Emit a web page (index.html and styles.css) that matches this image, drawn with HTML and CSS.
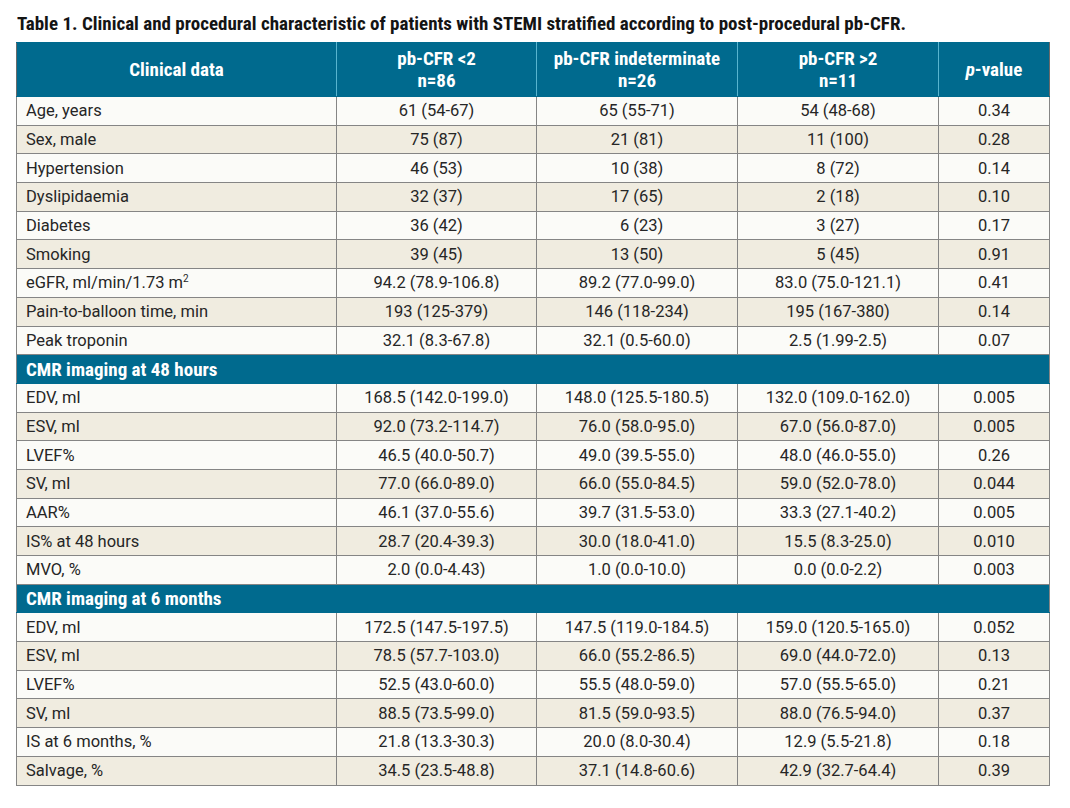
FILE: index.html
```html
<!DOCTYPE html>
<html lang="en">
<head>
<meta charset="utf-8">
<title>Table 1</title>
<link rel="stylesheet" href="styles.css">
</head>
<body>
<div class="page">
  <h1 class="caption">Table 1. Clinical and procedural characteristic of patients with STEMI stratified according to post-procedural pb-CFR.</h1>
  <table class="data">
    <colgroup>
      <col class="c1"><col class="c2"><col class="c3"><col class="c4"><col class="c5">
    </colgroup>
    <thead>
      <tr>
        <th>Clinical data</th>
        <th>pb-CFR &lt;2<br>n=86</th>
        <th>pb-CFR indeterminate<br>n=26</th>
        <th>pb-CFR &gt;2<br>n=11</th>
        <th><i>p</i>-value</th>
      </tr>
    </thead>
    <tbody>
      <tr class="w"><td>Age, years</td><td>61 (54-67)</td><td>65 (55-71)</td><td>54 (48-68)</td><td>0.34</td></tr>
      <tr class="b"><td>Sex, male</td><td>75 (87)</td><td>21 (81)</td><td>11 (100)</td><td>0.28</td></tr>
      <tr class="w"><td>Hypertension</td><td>46 (53)</td><td>10 (38)</td><td>8 (72)</td><td>0.14</td></tr>
      <tr class="b"><td>Dyslipidaemia</td><td>32 (37)</td><td>17 (65)</td><td>2 (18)</td><td>0.10</td></tr>
      <tr class="w"><td>Diabetes</td><td>36 (42)</td><td>&#8199;6 (23)</td><td>3 (27)</td><td>0.17</td></tr>
      <tr class="b"><td>Smoking</td><td>39 (45)</td><td>13 (50)</td><td>5 (45)</td><td>0.91</td></tr>
      <tr class="w"><td>eGFR, ml/min/1.73 m<sup>2</sup></td><td>94.2 (78.9-106.8)</td><td>89.2 (77.0-99.0)</td><td>83.0 (75.0-121.1)</td><td>0.41</td></tr>
      <tr class="b"><td>Pain-to-balloon time, min</td><td>193 (125-379)</td><td>146 (118-234)</td><td>195 (167-380)</td><td>0.14</td></tr>
      <tr class="w"><td>Peak troponin</td><td>32.1 (8.3-67.8)</td><td>32.1 (0.5-60.0)</td><td>2.5 (1.99-2.5)</td><td>0.07</td></tr>
      <tr class="section"><td colspan="5">CMR imaging at 48 hours</td></tr>
      <tr class="w"><td>EDV, ml</td><td>168.5 (142.0-199.0)</td><td>148.0 (125.5-180.5)</td><td>132.0 (109.0-162.0)</td><td>0.005</td></tr>
      <tr class="b"><td>ESV, ml</td><td>92.0 (73.2-114.7)</td><td>76.0 (58.0-95.0)</td><td>67.0 (56.0-87.0)</td><td>0.005</td></tr>
      <tr class="w"><td>LVEF%</td><td>46.5 (40.0-50.7)</td><td>49.0 (39.5-55.0)</td><td>48.0 (46.0-55.0)</td><td>0.26</td></tr>
      <tr class="b"><td>SV, ml</td><td>77.0 (66.0-89.0)</td><td>66.0 (55.0-84.5)</td><td>59.0 (52.0-78.0)</td><td>0.044</td></tr>
      <tr class="w"><td>AAR%</td><td>46.1 (37.0-55.6)</td><td>39.7 (31.5-53.0)</td><td>33.3 (27.1-40.2)</td><td>0.005</td></tr>
      <tr class="b"><td>IS% at 48 hours</td><td>28.7 (20.4-39.3)</td><td>30.0 (18.0-41.0)</td><td>15.5 (8.3-25.0)</td><td>0.010</td></tr>
      <tr class="w"><td>MVO, %</td><td>2.0 (0.0-4.43)</td><td>1.0 (0.0-10.0)</td><td>0.0 (0.0-2.2)</td><td>0.003</td></tr>
      <tr class="section"><td colspan="5">CMR imaging at 6 months</td></tr>
      <tr class="w"><td>EDV, ml</td><td>172.5 (147.5-197.5)</td><td>147.5 (119.0-184.5)</td><td>159.0 (120.5-165.0)</td><td>0.052</td></tr>
      <tr class="b"><td>ESV, ml</td><td>78.5 (57.7-103.0)</td><td>66.0 (55.2-86.5)</td><td>69.0 (44.0-72.0)</td><td>0.13</td></tr>
      <tr class="w"><td>LVEF%</td><td>52.5 (43.0-60.0)</td><td>55.5 (48.0-59.0)</td><td>57.0 (55.5-65.0)</td><td>0.21</td></tr>
      <tr class="b"><td>SV, ml</td><td>88.5 (73.5-99.0)</td><td>81.5 (59.0-93.5)</td><td>88.0 (76.5-94.0)</td><td>0.37</td></tr>
      <tr class="w"><td>IS at 6 months, %</td><td>21.8 (13.3-30.3)</td><td>20.0 (8.0-30.4)</td><td>12.9 (5.5-21.8)</td><td>0.18</td></tr>
      <tr class="b"><td>Salvage, %</td><td>34.5 (23.5-48.8)</td><td>37.1 (14.8-60.6)</td><td>42.9 (32.7-64.4)</td><td>0.39</td></tr>
    </tbody>
  </table>
</div>
</body>
</html>
```

FILE: styles.css
```css
html, body {
  margin: 0;
  padding: 0;
  background: #ffffff;
}

.page {
  padding: 13px 0 0 16px;
}

.caption {
  margin: 0 0 7px 1px;
  font-family: "Roboto Condensed", "Roboto", sans-serif;
  font-stretch: 75%;
  font-weight: bold;
  font-size: 19px;
  line-height: 22px;
  color: #141414;
}

.data {
  width: 1033px;
  table-layout: fixed;
  border-collapse: collapse;
  font-family: "Roboto", "DejaVu Sans", sans-serif;
  font-size: 16.5px;
  color: #262626;
}

.c1 { width: 320px; }
.c2 { width: 200px; }
.c3 { width: 201px; }
.c4 { width: 201px; }
.c5 { width: 111px; }

.data th {
  height: 53px;
  padding: 0;
  background: #006a8e;
  color: #ffffff;
  font-family: "Roboto Condensed", "Roboto", sans-serif;
  font-stretch: 75%;
  font-weight: bold;
  font-size: 19px;
  line-height: 22px;
  text-align: center;
  vertical-align: middle;
  border: 1px solid #006a8e;
  border-left: 1px solid #58b4cf;
  border-right: 1px solid #58b4cf;
}

.data th:first-child { border-left-color: #6a6a6a; }
.data th:last-child { border-right-color: #6a6a6a; }
.data thead tr { border-top: 1px solid #6a6a6a; }

.data td {
  height: 27.7px;
  padding: 0;
  text-align: center;
  vertical-align: middle;
  border: 1px solid #858585;
  white-space: nowrap;
}

.data td:first-child {
  text-align: left;
  padding-left: 9px;
}

.data tr.w td { background: #fbfbf8; }
.data tr.b td { background: #f0ece0; }

.data tr.section td {
  background: #006a8e;
  color: #ffffff;
  font-family: "Roboto Condensed", "Roboto", sans-serif;
  font-stretch: 75%;
  font-weight: bold;
  font-size: 19px;
  border-color: #006a8e #858585;
}

sup {
  font-size: 10px;
  line-height: 0;
  vertical-align: 6px;
}
```
